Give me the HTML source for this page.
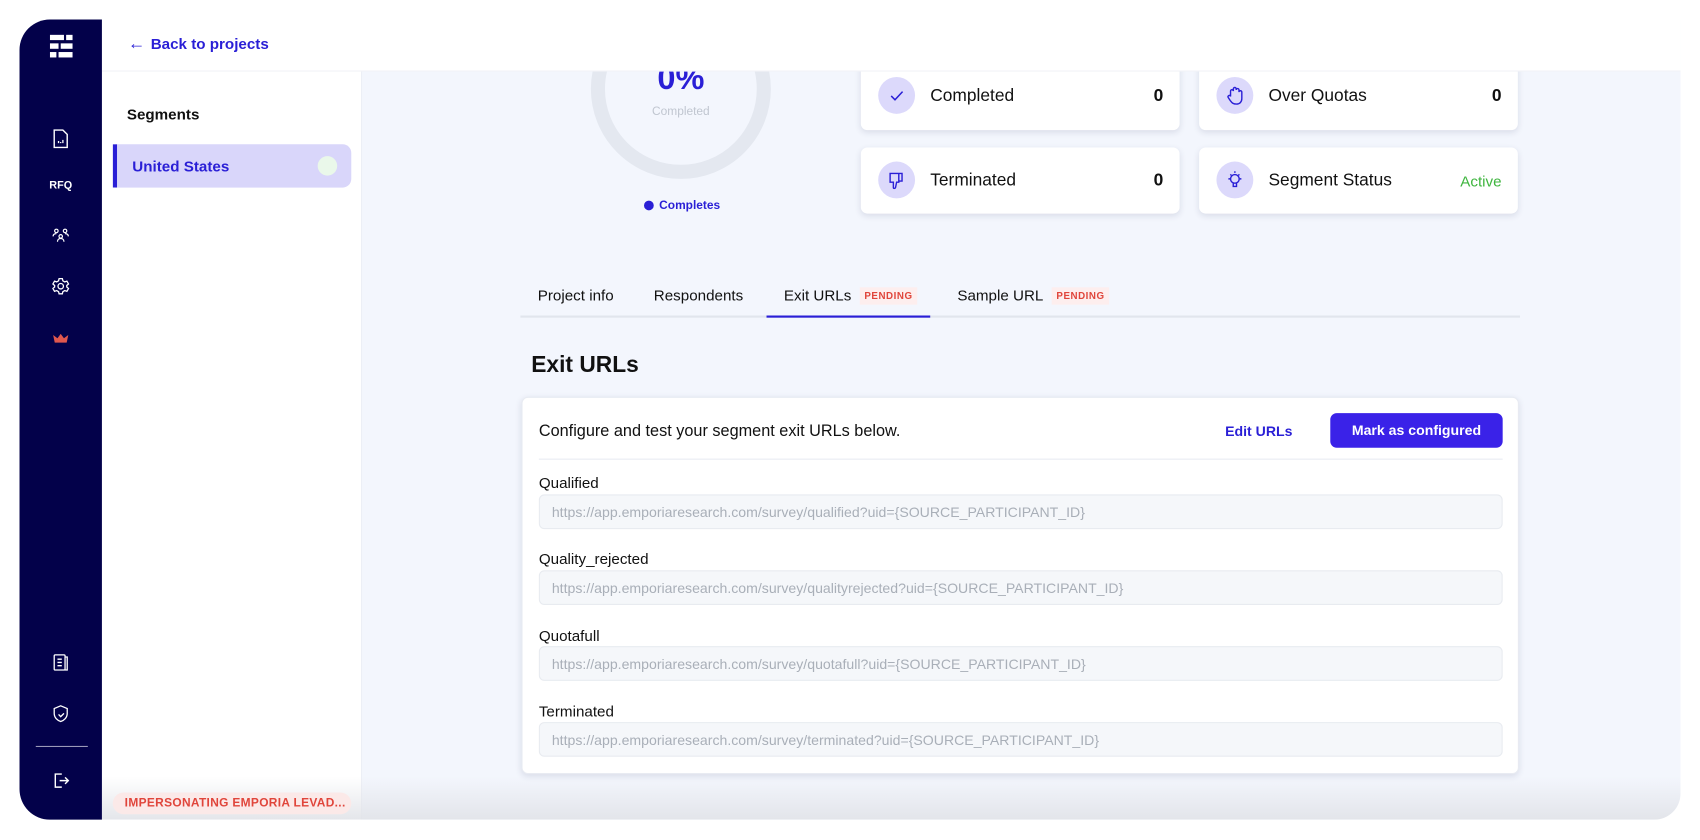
<!DOCTYPE html>
<html><head><meta charset="utf-8"><style>
*{box-sizing:border-box;margin:0;padding:0}
html,body{width:1700px;height:840px;overflow:hidden;background:#fff;font-family:"Liberation Sans",sans-serif}
#w{position:absolute;left:0;top:0;width:1568px;height:775px;transform:scale(1.08418);transform-origin:0 0}
.a{position:absolute}
.side{left:18px;top:18px;width:76px;height:738px;background:#03014a;border-radius:28px 0 0 28px}
.ic{position:absolute;left:46px;width:20px;height:20px}
.card{position:absolute;background:#fff;border-radius:6px;box-shadow:0 2px 6px rgba(30,40,80,.12)}
.circ{position:absolute;left:16px;width:34px;height:34px;border-radius:50%;background:#dcd9fb}
.lbl{position:absolute;left:64px;font-size:16px;color:#111}
.val{position:absolute;right:15px;font-size:16px;font-weight:bold;color:#111}
.tab{position:absolute;top:264px;font-size:14px;color:#111}
.pend{font-size:9px;font-weight:bold;color:#e0453b;background:#fdeeee;padding:3px 4px;margin-left:8px;letter-spacing:.5px;vertical-align:1px}
.fl{position:absolute;left:15px;font-size:14px;color:#111}
.in{position:absolute;left:15px;width:889px;height:32px;background:#f5f7fa;border:1px solid #e8ebf0;border-radius:5px;font-size:13px;color:#a9afb8;padding:8px 11px}
</style></head><body><div id="w">
<div class="a" style="left:94px;top:18px;width:1456px;height:738px;background:#f3f6fd;border-radius:0 0 24px 0;overflow:hidden">
  <div class="a" style="left:0;top:0;width:240px;height:738px;background:#fff;border-right:1px solid #eceff6"></div>
  <div class="a" style="left:0;bottom:0;width:1456px;height:40px;background:linear-gradient(rgba(230,232,238,0),rgba(225,227,232,.9))"></div>
</div>
<!-- donut -->
<div class="a" style="left:540px;top:66px;width:180px;height:110px;overflow:hidden">
<div class="a" style="left:5px;top:-67px;width:166px;height:166px;border-radius:50%;border:13px solid #e4e8f0"></div>
<div class="a" style="left:20px;top:-10px;width:136px;text-align:center;font-size:30px;font-weight:bold;color:#2a1fd6">0%</div>
<div class="a" style="left:20px;top:31px;width:136px;text-align:center;font-size:11px;color:#c0c6d0">Completed</div>
</div>
<div class="a" style="left:594px;top:184px;font-size:11px;font-weight:bold;color:#2a1fd6"><span style="display:inline-block;width:9px;height:9px;border-radius:50%;background:#2a1fd6;margin-right:5px;vertical-align:-1px"></span>Completes</div>
<!-- cards -->
<div class="card" style="left:794px;top:50px;width:294px;height:70px"><div class="circ" style="top:21px"><svg width="34" height="34" viewBox="0 0 34 34"><path d="M12 17.5l3.5 3.5 7-7.5" fill="none" stroke="#2a1fd6" stroke-width="1.4"/></svg></div><div class="lbl" style="top:30px">Completed</div><div class="val" style="top:30px">0</div></div>
<div class="card" style="left:1106px;top:50px;width:294px;height:70px"><div class="circ" style="top:21px"><svg width="34" height="34" viewBox="0 0 34 34"><path d="M13 18v-5a1.3 1.3 0 012.6 0v-2a1.3 1.3 0 012.6 0v1a1.3 1.3 0 012.6 0v2a1.3 1.3 0 012.6 0v6c0 3-2 5-5 5s-4-1-5.5-3l-2-3a1.2 1.2 0 012-1.4z" fill="none" stroke="#2a1fd6" stroke-width="1.3"/></svg></div><div class="lbl" style="top:30px">Over Quotas</div><div class="val" style="top:30px">0</div></div>
<div class="card" style="left:794px;top:136px;width:294px;height:61px"><div class="circ" style="top:13px"><svg width="34" height="34" viewBox="0 0 34 34"><path d="M11 11h8v8h-2l-1 5c-.3 1-2 1-2 0v-5h-3zM19 11h3v7h-3" fill="none" stroke="#2a1fd6" stroke-width="1.3"/></svg></div><div class="lbl" style="top:22px">Terminated</div><div class="val" style="top:22px">0</div></div>
<div class="card" style="left:1106px;top:136px;width:294px;height:61px"><div class="circ" style="top:13px"><svg width="34" height="34" viewBox="0 0 34 34"><circle cx="17" cy="16" r="4" fill="none" stroke="#2a1fd6" stroke-width="1.3"/><path d="M15.5 20v3h3v-3M17 9v1.5M11 16h1.5M21.5 16H23M12.8 11.8l1 1M21.2 11.8l-1 1" fill="none" stroke="#2a1fd6" stroke-width="1.3"/></svg></div><div class="lbl" style="top:22px">Segment Status</div><div class="a" style="right:15px;top:23px;font-size:14px;color:#3fb53f">Active</div></div>
<!-- tabs -->
<div class="a" style="left:480px;top:291px;width:922px;height:2px;background:#e1e5ed"></div>
<div class="a" style="left:707px;top:291px;width:151px;height:2px;background:#2a1fd6"></div>
<div class="tab" style="left:496px">Project info</div>
<div class="tab" style="left:603px">Respondents</div>
<div class="tab" style="left:723px">Exit URLs<span class="pend">PENDING</span></div>
<div class="tab" style="left:883px">Sample URL<span class="pend">PENDING</span></div>
<div class="a" style="left:490px;top:325px;font-size:21px;font-weight:bold;color:#111">Exit URLs</div>
<!-- exit card -->
<div class="card" style="left:481px;top:366px;width:920px;height:348px;border:1px solid #e8ebf2">
  <div class="a" style="left:15px;top:22px;font-size:15px;color:#111">Configure and test your segment exit URLs below.</div>
  <div class="a" style="left:648px;top:23px;font-size:13px;font-weight:bold;color:#2a1fd6">Edit URLs</div>
  <div class="a" style="left:745px;top:14px;width:159px;height:32px;background:#3a22e8;border-radius:6px;color:#fff;font-size:13px;font-weight:bold;text-align:center;line-height:32px">Mark as configured</div>
  <div class="a" style="left:15px;top:56px;width:889px;height:1px;background:#e8ebf2"></div>
  <div class="fl" style="top:70px">Qualified</div>
  <div class="in" style="top:89px">https://app.emporiaresearch.com/survey/qualified?uid={SOURCE_PARTICIPANT_ID}</div>
  <div class="fl" style="top:140px">Quality_rejected</div>
  <div class="in" style="top:159px">https://app.emporiaresearch.com/survey/qualityrejected?uid={SOURCE_PARTICIPANT_ID}</div>
  <div class="fl" style="top:211px">Quotafull</div>
  <div class="in" style="top:229px">https://app.emporiaresearch.com/survey/quotafull?uid={SOURCE_PARTICIPANT_ID}</div>
  <div class="fl" style="top:281px">Terminated</div>
  <div class="in" style="top:299px">https://app.emporiaresearch.com/survey/terminated?uid={SOURCE_PARTICIPANT_ID}</div>
</div>
<!-- top bar -->
<div class="a" style="left:94px;top:18px;width:1456px;height:48px;background:#fff;border-bottom:1px solid #f0f2f7"></div>
<div class="a" style="left:118px;top:32px;font-size:14px;font-weight:bold;color:#2a1fd6"><span style="font-weight:normal;font-size:16px;margin-right:5px">←</span>Back to projects</div>
<!-- segments -->
<div class="a" style="left:117px;top:97px;font-size:14px;font-weight:bold;color:#111">Segments</div>
<div class="a" style="left:104px;top:133px;width:220px;height:40px;background:#d9d6fa;border-radius:0 8px 8px 0;border-left:4px solid #2a1fd6"></div>
<div class="a" style="left:122px;top:145px;font-size:14px;font-weight:bold;color:#2a1fd6">United States</div>
<div class="a" style="left:293px;top:144px;width:18px;height:18px;border-radius:50%;background:#eaf8ea"></div>
<div class="a" style="left:104px;top:731px;width:220px;height:20px;border-radius:10px;background:#fbe9e8;color:#e0453b;font-size:11px;font-weight:bold;line-height:20px;padding-left:11px;letter-spacing:.3px">IMPERSONATING EMPORIA LEVAD...</div>
<!-- sidebar -->
<div class="a side">
 <svg class="a" style="top:14px;left:28px" width="21" height="25" viewBox="0 0 21 25"><g fill="#fff"><rect x="0" y="0" width="13" height="5"/><rect x="15" y="0" width="6" height="5"/><rect x="0" y="8" width="8" height="5"/><rect x="10" y="8" width="11" height="5"/><rect x="0" y="16" width="6" height="5"/><rect x="8" y="16" width="13" height="5"/></g></svg>
 <svg class="ic" style="top:100px;left:28px" width="20" height="20" viewBox="0 0 20 20"><path d="M4 2h8l4 4v12H4z" fill="none" stroke="#fff" stroke-width="1.3"/><path d="M8 14v-2M10 14v-1M12 14v-3" stroke="#fff" stroke-width="1.2"/></svg>
 <div class="a" style="left:0;width:76px;top:148px;text-align:center;font-size:10px;font-weight:bold;color:#fff">RFQ</div>
 <svg class="ic" style="top:190px;left:28px" width="20" height="20" viewBox="0 0 20 20"><g fill="none" stroke="#fff" stroke-width="1.1"><circle cx="6" cy="5" r="1.6"/><circle cx="14" cy="5" r="1.6"/><circle cx="10" cy="10" r="1.6"/><path d="M3 10c0-1.5 1-2.5 3-2.5M17 10c0-1.5-1-2.5-3-2.5M7 15c0-2 1.3-3 3-3s3 1 3 3"/></g></svg>
 <svg class="ic" style="top:236px;left:28px" width="20" height="20" viewBox="0 0 20 20"><g fill="none" stroke="#fff" stroke-width="1.2"><circle cx="10" cy="10" r="2.5"/><path d="M8.5 3h3l.5 2 1.7 1 2-.7 1.5 2.6-1.6 1.4v1.4l1.6 1.4-1.5 2.6-2-.7-1.7 1-.5 2h-3l-.5-2-1.7-1-2 .7-1.5-2.6 1.6-1.4V9.3L2.8 7.9l1.5-2.6 2 .7 1.7-1z"/></g></svg>
 <svg class="ic" style="top:284px;left:28px" width="20" height="20" viewBox="0 0 20 20"><path d="M3 7l4 3 3-4 3 4 4-3-1.5 7h-11z" fill="#e0574e"/></svg>
 <svg class="ic" style="top:583px;left:28px" width="20" height="20" viewBox="0 0 20 20"><g fill="none" stroke="#fff" stroke-width="1.2"><rect x="4" y="3" width="10" height="14" rx="1"/><path d="M14 5h2v12h-2M7 7h4M7 10h4M7 13h4"/></g></svg>
 <svg class="ic" style="top:630px;left:28px" width="20" height="20" viewBox="0 0 20 20"><path d="M10 3l6 2.5v4.5c0 4-3 6.5-6 7.5-3-1-6-3.5-6-7.5V5.5z M8 11l2 2 3-3" fill="none" stroke="#fff" stroke-width="1.2"/></svg>
 <div class="a" style="left:15px;top:670px;width:48px;height:1px;background:#9a99b8"></div>
 <svg class="ic" style="top:692px;left:28px" width="20" height="20" viewBox="0 0 20 20"><path d="M11 4H5v12h6M9 10h8M14 7l3 3-3 3" fill="none" stroke="#fff" stroke-width="1.3"/></svg>
</div>
</div></body></html>
